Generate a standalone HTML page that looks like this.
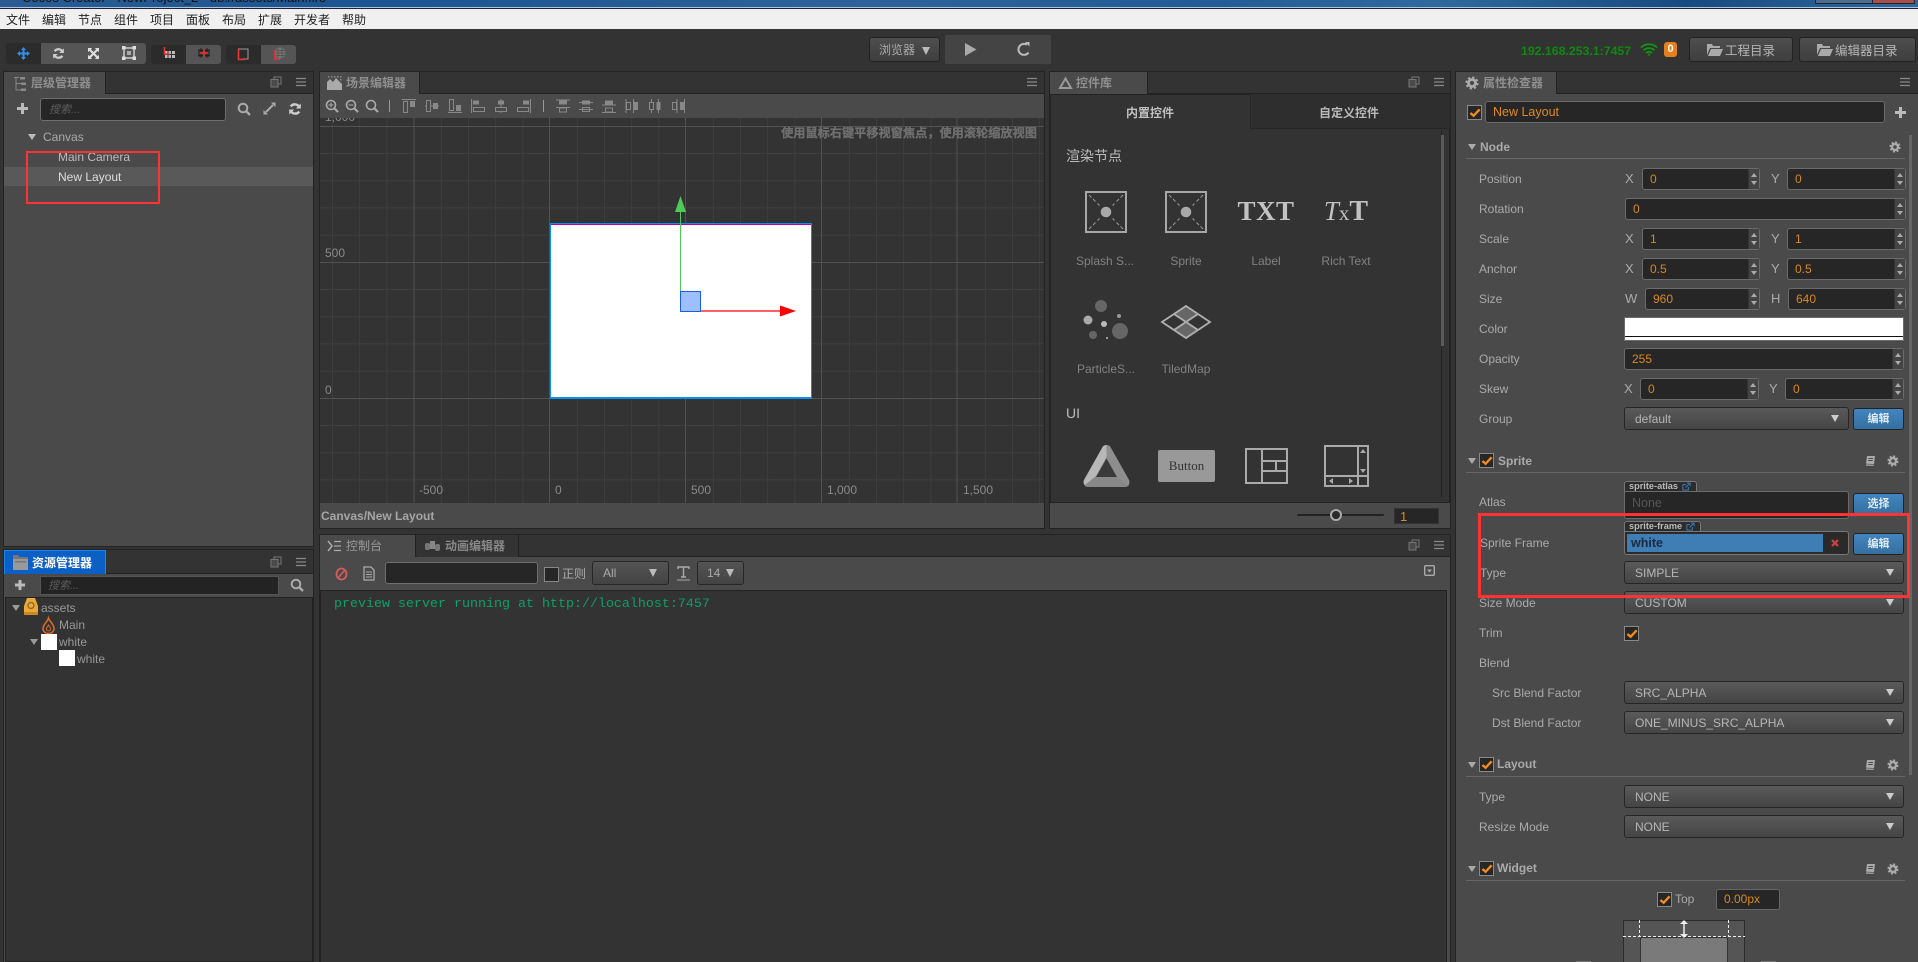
<!DOCTYPE html>
<html lang="zh"><head><meta charset="utf-8"><title>Cocos Creator</title>
<style>
html,body{margin:0;padding:0;width:1918px;height:962px;overflow:hidden;background:#333}
*{box-sizing:border-box}
body{font-family:"Liberation Sans","Noto Sans CJK SC",sans-serif;font-size:12px;color:#aaa;position:relative}
.a{position:absolute}
.t{position:absolute;white-space:nowrap;line-height:14px;height:14px}
.m{position:absolute;top:13px;color:#222;font-size:12px;line-height:14px;white-space:nowrap}
.panel{position:absolute;background:#4a4a4a;border:1px solid #232323}
.bar{position:absolute;left:0;right:0;top:0;height:22px;background:#333;border-bottom:1px solid #222}
.tab{position:absolute;left:0;top:0;height:22px;background:#4a4a4a;border-right:1px solid #222;color:#999;font-weight:bold;line-height:23px}
.num,.sel,.inp{position:absolute}
.num{background:#262626;border:1px solid #6b6b6b;border-radius:3px;color:#d8881f;line-height:20px;padding-left:7px;height:22px}
.num i{position:absolute;right:0;top:0;bottom:0;width:11px;background:#444;border-left:1px solid #333}
.num i:before{content:"";position:absolute;left:2px;top:4px;border:3px solid transparent;border-top:0;border-bottom:4px solid #aaa}
.num i:after{content:"";position:absolute;left:2px;bottom:4px;border:3px solid transparent;border-bottom:0;border-top:4px solid #aaa}
.sel{background:linear-gradient(#5a5a5a,#454545);border:1px solid #262626;border-radius:3px;color:#b5b5b5;height:23px;line-height:23px;padding-left:10px}
.sel:after{content:"";position:absolute;right:9px;top:7px;border:4px solid transparent;border-bottom:0;border-top:7px solid #ccc;border-left-width:4px;border-right-width:4px}
.lab{position:absolute;left:1479px;white-space:nowrap;line-height:14px;color:#aaa}
.ax{position:absolute;white-space:nowrap;line-height:14px;color:#aaa;font-size:13px}
.hd{position:absolute;left:1498px;font-weight:bold;color:#aaa;line-height:14px;white-space:nowrap}
.ln{position:absolute;left:1466px;width:439px;height:1px;background:#666}
.cb{position:absolute;width:15px;height:15px;background:#262626;border:1px solid #8a8a8a}
.cb svg{position:absolute;left:1px;top:1px}
.btn{position:absolute;left:1853px;width:51px;height:22px;border-radius:3px;background:linear-gradient(#4285bf,#35709f);border:1px solid #222;color:#dfeaf5;font-size:11px;font-weight:bold;text-align:center;line-height:20px}
.dn{position:absolute;border:4px solid transparent;border-bottom:0;border-top:6px solid #aaa}
.big{position:absolute;color:#828282;line-height:14px;text-align:center;white-space:nowrap;width:80px}
.lbl{position:absolute;color:#8a8a8a;line-height:14px;white-space:nowrap}
.tb{position:absolute;top:99px;width:14px;height:14px}
.pt{position:absolute;height:11px;background:#2c2c2c;border:1px solid #777;border-bottom:0;border-radius:3px 3px 0 0;color:#bbb;font-size:9.2px;font-weight:bold;line-height:9px;padding-left:4px;white-space:nowrap}
svg{display:block;overflow:visible}
</style></head><body>

<svg width="0" height="0" style="position:absolute"><defs>
<symbol id="gear" viewBox="0 0 12 12"><circle cx="6" cy="6" r="3" fill="none" stroke="#aaa" stroke-width="2.4"/><circle cx="6" cy="6" r="4.8" fill="none" stroke="#aaa" stroke-width="1.6" stroke-dasharray="2 1.77"/></symbol>
<symbol id="book" viewBox="0 0 12 12"><path d="M3 1h8l-1 8H2z" fill="#aaa"/><path d="M2 9l-.5 2H10l.5-1.6z" fill="#aaa" stroke="#4a4a4a" stroke-width=".6"/><path d="M4.5 3.5h4.5M4.2 5.5h4.5" stroke="#4a4a4a"/></symbol>
<symbol id="chk" viewBox="0 0 13 13"><path d="M1.5 6.5l3.5 3 6.5-7" fill="none" stroke="#f28a1c" stroke-width="2.6"/></symbol>
<symbol id="pop" viewBox="0 0 12 12"><rect x="1" y="3.5" width="7" height="7.5" fill="#4a4a4a" stroke="#777"/><path d="M4 3V1h7v7H8.5" fill="none" stroke="#777"/></symbol>
<symbol id="menu" viewBox="0 0 12 12"><path d="M1 2.5h10M1 6h10M1 9.500h10" stroke="#888" stroke-width="1.3"/></symbol>
<symbol id="mag" viewBox="0 0 14 14"><circle cx="6" cy="6" r="4.300" fill="none" stroke="#aaa" stroke-width="2"/><path d="M9 9l4 4" stroke="#aaa" stroke-width="2.400"/></symbol>
<symbol id="sync" viewBox="0 0 14 14"><path d="M11.500 5.500A5 5 0 0 0 2.800 4.500M2.500 8.500A5 5 0 0 0 11.200 9.500" fill="none" stroke="#ccc" stroke-width="2.400"/><path d="M12.800 1.500v5h-5zM1.200 12.500v-5h5z" fill="#ccc"/></symbol>
<symbol id="ext" viewBox="0 0 10 10"><path d="M7 5.500V9H1V3h3.500" fill="none" stroke="#3f83c0"/><path d="M4 6l4-4M5.500 1.200H9v3.500" fill="none" stroke="#3f83c0"/></symbol>
<symbol id="sprite" viewBox="0 0 42 42"><rect x="1" y="1" width="40" height="40" fill="none" stroke="#a8a8a8" stroke-width="2"/><circle cx="21" cy="21" r="5.300" fill="#a8a8a8"/><path d="M4 4l2.500 2.500M8 8l2.500 2.500M12.500 12.500l2 2M38 4l-2.500 2.500M34 8l-2.500 2.500M29.500 12.500l-2 2M4 38l2.500-2.500M8 34l2.500-2.500M12.500 29.500l2-2M38 38l-2.500-2.500M34 34l-2.500-2.500M29.500 29.500l-2-2" stroke="#999"/></symbol>
<symbol id="a1" viewBox="0 0 14 14"><path d="M0 .5h14" stroke="#888" stroke-width="1.200"/><rect x="1.500" y="2.500" width="4" height="11" fill="none" stroke="#888"/><rect x="8" y="2" width="5" height="6" fill="#888"/></symbol>
<symbol id="a2" viewBox="0 0 14 14"><path d="M0 7h14" stroke="#888"/><rect x="1.500" y="1.500" width="4" height="11" fill="#4a4a4a" stroke="#888"/><rect x="8" y="4" width="5" height="6" fill="#888"/></symbol>
<symbol id="a3" viewBox="0 0 14 14"><path d="M0 13.500h14" stroke="#888" stroke-width="1.200"/><rect x="1.500" y=".5" width="4" height="11" fill="none" stroke="#888"/><rect x="8" y="6" width="5" height="6" fill="#888"/></symbol>
<symbol id="a4" viewBox="0 0 14 14"><path d="M.5 0v14" stroke="#888" stroke-width="1.200"/><rect x="2" y="1.500" width="6" height="4" fill="#888"/><rect x="2.500" y="8.500" width="11" height="4" fill="none" stroke="#888"/></symbol>
<symbol id="a5" viewBox="0 0 14 14"><path d="M7 0v14" stroke="#888"/><rect x="4" y="1.500" width="6" height="4" fill="#888"/><rect x="1.500" y="8.500" width="11" height="4" fill="#4a4a4a" stroke="#888"/></symbol>
<symbol id="a6" viewBox="0 0 14 14"><path d="M13.500 0v14" stroke="#888" stroke-width="1.200"/><rect x="6" y="1.500" width="6" height="4" fill="#888"/><rect x=".5" y="8.500" width="11" height="4" fill="none" stroke="#888"/></symbol>
<symbol id="d1" viewBox="0 0 14 14"><path d="M0 1h14M0 8.500h14" stroke="#888"/><rect x="3" y="1.500" width="8" height="4" fill="#888"/><rect x="3.500" y="9" width="7" height="4" fill="none" stroke="#888"/></symbol>
<symbol id="d2" viewBox="0 0 14 14"><path d="M0 3.500h14M0 10.500h14" stroke="#888"/><rect x="3" y="1.500" width="8" height="4" fill="#888"/><rect x="3.500" y="8.500" width="7" height="4" fill="none" stroke="#888"/></symbol>
<symbol id="d3" viewBox="0 0 14 14"><path d="M0 6h14M0 13.500h14" stroke="#888"/><rect x="3" y="1.500" width="8" height="4" fill="#888"/><rect x="3.500" y="9" width="7" height="4" fill="none" stroke="#888"/></symbol>
<symbol id="v1" viewBox="0 0 14 14"><path d="M1 0v14M8.500 0v14" stroke="#888"/><rect x="1.500" y="3.500" width="4" height="7" fill="none" stroke="#888"/><rect x="9" y="3" width="4" height="8" fill="#888"/></symbol>
<symbol id="v2" viewBox="0 0 14 14"><path d="M3.500 0v14M10.500 0v14" stroke="#888"/><rect x="1.500" y="3.500" width="4" height="7" fill="#4a4a4a" stroke="#888"/><rect x="8.500" y="3" width="4" height="8" fill="#888"/></symbol>
<symbol id="v3" viewBox="0 0 14 14"><path d="M6 0v14M13.500 0v14" stroke="#888"/><rect x="1.500" y="3.500" width="4" height="7" fill="none" stroke="#888"/><rect x="9" y="3" width="4" height="8" fill="#888"/></symbol>
</defs></svg>

<!-- title bar -->
<div class="a" style="left:0;top:0;width:1918px;height:8px;background:linear-gradient(90deg,#2a5c92 0%,#1c5490 20%,#2d6399 45%,#235b95 62%,#2d6a9c 75%,#174a80 88%,#2f6a9d 100%);overflow:hidden">
  <div class="t" style="left:22px;top:-9px;color:#111;font-size:13px">Cocos Creator - NewProject_2 - db://assets/Main.fire</div>
  <div class="a" style="left:1815px;top:-12px;width:100px;height:16px;background:#4a6d90;border:1px solid #223"></div>
  <div class="a" style="left:1872px;top:-12px;width:43px;height:16px;background:#a85048;border:1px solid #223"></div>
</div>
<div class="a" style="left:0;top:7px;width:1918px;height:1px;background:#a8c4de"></div>
<div class="a" style="left:0;top:8px;width:1918px;height:1px;background:#223"></div>
<!-- menu -->
<div class="a" style="left:0;top:9px;width:1918px;height:20px;background:#f0f0f0">
  <div class="m" style="left:6px;top:4px">文件</div><div class="m" style="left:42px;top:4px">编辑</div><div class="m" style="left:78px;top:4px">节点</div><div class="m" style="left:114px;top:4px">组件</div><div class="m" style="left:150px;top:4px">项目</div><div class="m" style="left:186px;top:4px">面板</div><div class="m" style="left:222px;top:4px">布局</div><div class="m" style="left:258px;top:4px">扩展</div><div class="m" style="left:294px;top:4px">开发者</div><div class="m" style="left:342px;top:4px">帮助</div>
</div>

<!-- toolbar groups -->
<div class="a" style="left:6px;top:43px;width:35px;height:21px;background:#2b2b2b;border-radius:3px 0 0 3px"></div>
<div class="a" style="left:41px;top:43px;width:105px;height:21px;background:#555;border-radius:0 3px 3px 0"></div>
<svg class="a" style="left:17px;top:47px" width="13" height="13" viewBox="0 0 13 13"><path d="M6.500 0l2.500 3H7.500v2.500H10V4l3 2.500L10 9V7.500H7.500V10H9l-2.500 3L4 10h1.500V7.500H3V9L0 6.500 3 4v1.500h2.500V3H4z" fill="#2d8fef"/></svg>
<svg class="a" style="left:52px;top:47px" width="13" height="13"><use href="#sync"/></svg>
<svg class="a" style="left:87px;top:47px" width="13" height="13" viewBox="0 0 13 13"><path d="M1 1h4L4 2.500 6.500 5 9 2.500 8 1h4v4l-1.500-1L8 6.500 10.500 9 12 8v4H8l1-1.500L6.500 8 4 10.500 5 12H1V8l1.500 1L5 6.500 2.500 4 1 5z" fill="#ddd"/></svg>
<svg class="a" style="left:122px;top:46px" width="14" height="14" viewBox="0 0 14 14"><rect x="2" y="2" width="10" height="10" fill="none" stroke="#ccc" stroke-width="1.500"/><rect x="0" y="0" width="3.500" height="3.500" fill="#ddd"/><rect x="10.500" y="0" width="3.500" height="3.500" fill="#ddd"/><rect x="0" y="10.500" width="3.500" height="3.500" fill="#ddd"/><rect x="10.500" y="10.500" width="3.500" height="3.500" fill="#ddd"/><rect x="5" y="5" width="4" height="4" fill="#aaa"/></svg>

<div class="a" style="left:151px;top:45px;width:35px;height:19px;background:#2b2b2b;border-radius:3px 0 0 3px"></div>
<div class="a" style="left:186px;top:45px;width:35px;height:19px;background:#555;border-radius:0 3px 3px 0"></div>
<svg class="a" style="left:162px;top:47px" width="13" height="12" viewBox="0 0 13 12"><rect x="3" y="4" width="10" height="7" fill="#bbb"/><path d="M6 4v7M9.500 4v7M3 7.500h10" stroke="#333"/><path d="M2.500 0v7h5" fill="none" stroke="#e33" stroke-width="1.600"/></svg>
<svg class="a" style="left:198px;top:47px" width="12" height="12" viewBox="0 0 12 12"><rect x="0" y="2" width="12" height="8" fill="#3a3a3a"/><path d="M3 1v10M9 1v10M0 3.500h12M0 8.500h12" stroke="#222"/><path d="M6 2v8M2 6h8" stroke="#e33" stroke-width="1.500"/></svg>

<div class="a" style="left:226px;top:45px;width:35px;height:19px;background:#2b2b2b;border-radius:3px 0 0 3px"></div>
<div class="a" style="left:261px;top:45px;width:35px;height:19px;background:#555;border-radius:0 3px 3px 0"></div>
<svg class="a" style="left:237px;top:48px" width="12" height="13" viewBox="0 0 12 13"><path d="M1 1h10v10H4" fill="none" stroke="#999"/><path d="M1.500 1v10.500H8" fill="none" stroke="#e33" stroke-width="1.600"/></svg>
<svg class="a" style="left:273px;top:47px" width="13" height="14" viewBox="0 0 13 14"><circle cx="7" cy="6" r="5.500" fill="#777"/><path d="M2 3.500h10M1.500 6h11M2 8.500h10M5 .5v11M9 .5v11" stroke="#555"/><path d="M2 3v9h5" fill="none" stroke="#e33" stroke-width="1.600"/></svg>

<!-- centre controls -->
<div class="a" style="left:869px;top:37px;width:71px;height:25px;background:linear-gradient(#4e4e4e,#3e3e3e);border:1px solid #222;border-radius:3px"><div class="t" style="left:9px;top:5px;color:#aaa">浏览器</div><div class="dn" style="left:52px;top:9px;border-top-width:8px;border-left-width:4px;border-right-width:4px;border-top-color:#bbb"></div></div>
<div class="a" style="left:945px;top:35px;width:106px;height:29px;background:#444;border-radius:2px"></div>
<svg class="a" style="left:965px;top:43px" width="12" height="13"><path d="M0 0l11.500 6.500L0 13z" fill="#aaa"/></svg>
<svg class="a" style="left:1017px;top:42px" width="14" height="14" viewBox="0 0 14 14"><path d="M11.500 10.500A5.500 5.500 0 1 1 10 2.800" fill="none" stroke="#bbb" stroke-width="2"/><path d="M8 0h4.500v4.500z" fill="#bbb"/></svg>

<!-- right top -->
<div class="t" style="left:1521px;top:44px;color:#0d8a0d;font-size:12.300px;font-weight:bold">192.168.253.1:7457</div>
<svg class="a" style="left:1640px;top:43px" width="18" height="13" viewBox="0 0 18 13"><path d="M1 4.500a11.500 11.500 0 0 1 16 0M3.500 7.300a8 8 0 0 1 11 0M6 10a4.500 4.500 0 0 1 6 0" fill="none" stroke="#0d9a0d" stroke-width="1.700"/><path d="M9 10l1.500 2.500h-3z" fill="#0d9a0d"/></svg>
<div class="a" style="left:1664px;top:42px;width:13px;height:15px;background:#e77f1c;border-radius:3px;color:#fff;font-size:11px;font-weight:bold;text-align:center;line-height:15px">0</div>
<div class="a" style="left:1689px;top:37px;width:104px;height:25px;background:linear-gradient(#4e4e4e,#3e3e3e);border:1px solid #222;border-radius:3px"><svg class="a" style="left:17px;top:6px" width="16" height="12" viewBox="0 0 16 12"><path d="M0 0h5l1 2h7v2H3L0 11z M1 12l3-7h12l-3 7z" fill="#aaa"/></svg><div class="t" style="left:35px;top:6px;color:#b5b5b5;font-size:12.500px">工程目录</div></div>
<div class="a" style="left:1799px;top:37px;width:117px;height:25px;background:linear-gradient(#4e4e4e,#3e3e3e);border:1px solid #222;border-radius:3px"><svg class="a" style="left:17px;top:6px" width="16" height="12" viewBox="0 0 16 12"><path d="M0 0h5l1 2h7v2H3L0 11z M1 12l3-7h12l-3 7z" fill="#aaa"/></svg><div class="t" style="left:35px;top:6px;color:#b5b5b5;font-size:12.500px">编辑器目录</div></div>

<!-- hierarchy panel -->
<div class="panel" style="left:3px;top:71px;width:311px;height:476px">
  <div class="bar"></div>
  <div class="tab" style="width:102px;padding-left:27px;color:#8f8f8f">层级管理器</div>
</div>
<svg class="a" style="left:13px;top:76px" width="13" height="16" viewBox="0 0 13 16"><path d="M1 1.500h5M3 2v12h5M3 7.500h5" fill="none" stroke="#888"/><rect x="7" y="1" width="5" height="2.500" fill="#888"/><rect x="8" y="6.500" width="5" height="2.500" fill="#888"/><rect x="8" y="12.500" width="5" height="2.500" fill="#888"/></svg>
<svg class="a" style="left:270px;top:76px" width="12" height="12"><use href="#pop"/></svg>
<svg class="a" style="left:295px;top:76px" width="12" height="12"><use href="#menu"/></svg>
<svg class="a" style="left:17px;top:103px" width="11" height="11"><path d="M4 0h3v4h4v3H7v4H4V7H0V4h4z" fill="#bbb"/></svg>
<div class="a" style="left:40px;top:98px;width:186px;height:23px;background:#262626;border:1px solid #6e6e6e;border-radius:3px"><div class="t" style="left:8px;top:4px;color:#5c5c5c;font-style:italic;font-size:11px">搜索...</div></div>
<svg class="a" style="left:237px;top:102px" width="14" height="14"><use href="#mag"/></svg>
<svg class="a" style="left:263px;top:102px" width="13" height="13" viewBox="0 0 13 13"><path d="M8 .5h4.500V5zM5 12.500H.5V8z" fill="#aaa"/><path d="M3 10l7-7" stroke="#aaa" stroke-width="2"/></svg>
<svg class="a" style="left:288px;top:102px" width="14" height="14"><use href="#sync"/></svg>
<div class="dn" style="left:28px;top:134px;border-top-color:#bbb"></div>
<div class="t" style="left:43px;top:130px;color:#aaa">Canvas</div>
<div class="a" style="left:4px;top:167px;width:309px;height:19px;background:#595959"></div>
<div class="t" style="left:58px;top:150px;color:#bbb">Main Camera</div>
<div class="t" style="left:58px;top:170px;color:#ddd">New Layout</div>
<div class="a" style="left:26px;top:151px;width:134px;height:53px;border:2px solid #ff3333"></div>

<!-- assets panel -->
<div class="panel" style="left:3px;top:549px;width:311px;height:413px;border-bottom:0">
  <div class="bar" style="height:24px"></div>
  <div class="tab" style="width:102px;height:24px;background:#0c5fc4;padding-left:27px;color:#fff;line-height:24px;border:1px solid #1e86e8;border-bottom:0">资源管理器</div>
</div>
<svg class="a" style="left:13px;top:555px" width="15" height="15" viewBox="0 0 15 15"><path d="M0 0h5l1.500 2H15v13H0z" fill="#777"/><path d="M0 4h15v11H0z" fill="#999"/><path d="M2 6h11v1.500H2z" fill="#777"/></svg>
<svg class="a" style="left:270px;top:556px" width="12" height="12"><use href="#pop"/></svg>
<svg class="a" style="left:295px;top:556px" width="12" height="12"><use href="#menu"/></svg>
<svg class="a" style="left:15px;top:580px" width="10" height="10"><path d="M3.500 0h3v3.500H10v3H6.500V10h-3V6.500H0v-3h3.500z" fill="#bbb"/></svg>
<div class="a" style="left:40px;top:576px;width:239px;height:19px;background:#232323;border:1px solid #555"><div class="t" style="left:7px;top:2px;color:#5c5c5c;font-style:italic;font-size:11px">搜索...</div></div>
<svg class="a" style="left:290px;top:578px" width="14" height="14"><use href="#mag"/></svg>
<div class="a" style="left:5px;top:597px;width:308px;height:365px;background:#333;border:1px solid #232323"></div>
<div class="dn" style="left:12px;top:605px;border-top-color:#999"></div>
<svg class="a" style="left:24px;top:598px" width="14" height="17" viewBox="0 0 14 17"><path d="M3 0h8l3 8v7H0V8z" fill="#e8a93a"/><path d="M0 14h14v3H0z" fill="#c98a20"/><circle cx="7" cy="7.500" r="3" fill="none" stroke="#8a6a20" stroke-width="1.300"/></svg>
<div class="t" style="left:41px;top:601px;color:#999">assets</div>
<svg class="a" style="left:42px;top:617px" width="13" height="17" viewBox="0 0 13 17"><path d="M6.500 1C8 5 12 7.500 12 11.500a5.500 5 0 0 1-11 0C1 7.500 5.500 5 6.500 1z" fill="none" stroke="#d9692a" stroke-width="1.600"/><path d="M6.500 8c.7 1.500 2 2.500 2 4a2 2 0 0 1-4 0c0-1.500 1.300-2.500 2-4z" fill="none" stroke="#d9692a"/></svg>
<div class="t" style="left:59px;top:618px;color:#999">Main</div>
<div class="dn" style="left:30px;top:639px;border-top-color:#999"></div>
<div class="a" style="left:41px;top:634px;width:16px;height:16px;background:#fff"></div>
<div class="t" style="left:59px;top:635px;color:#999">white</div>
<div class="a" style="left:59px;top:650px;width:16px;height:16px;background:#fff"></div>
<div class="t" style="left:77px;top:652px;color:#999">white</div>

<!-- scene panel -->
<div class="panel" style="left:319px;top:71px;width:726px;height:458px">
  <div class="bar"></div>
  <div class="tab" style="width:100px;padding-left:26px;color:#8f8f8f">场景编辑器</div>
  <div class="a" style="left:0;right:0;top:22px;height:25px;background:#4a4a4a;border-bottom:1px solid #222"></div>
</div>
<svg class="a" style="left:327px;top:75px" width="15" height="15" viewBox="0 0 15 15"><path d="M0 15V7l3-3 3 3 3-4 6 6v6z" fill="#aaa"/><path d="M1 1h1.500v1.500H1zM4 1h1.500v1.500H4zM7 1h1.500v1.500H7zM10 1h1.500v1.500H10zM13 1h1.500v1.500H13zM13 4h1.500v1.500H13z" fill="#888"/></svg>
<svg class="a" style="left:1026px;top:76px" width="12" height="12"><use href="#menu"/></svg>
<!-- scene toolbar -->
<svg class="tb" style="left:325px"><circle cx="6" cy="6" r="4.500" fill="none" stroke="#aaa" stroke-width="1.600"/><path d="M9 9l4 4" stroke="#aaa" stroke-width="2.200"/><path d="M3.500 6h5M6 3.500v5" stroke="#aaa"/></svg>
<svg class="tb" style="left:345px"><circle cx="6" cy="6" r="4.500" fill="none" stroke="#aaa" stroke-width="1.600"/><path d="M9 9l4 4" stroke="#aaa" stroke-width="2.200"/><path d="M3.500 6h5" stroke="#aaa"/></svg>
<svg class="tb" style="left:365px"><circle cx="6" cy="6" r="4.500" fill="none" stroke="#aaa" stroke-width="1.600"/><path d="M9 9l4 4" stroke="#aaa" stroke-width="2.200"/></svg>
<div class="a" style="left:389px;top:100px;width:1px;height:12px;background:#999"></div>
<svg class="tb" style="left:402px"><use href="#a1"/></svg><svg class="tb" style="left:425px"><use href="#a2"/></svg><svg class="tb" style="left:448px"><use href="#a3"/></svg><svg class="tb" style="left:471px"><use href="#a4"/></svg><svg class="tb" style="left:494px"><use href="#a5"/></svg><svg class="tb" style="left:517px"><use href="#a6"/></svg>
<div class="a" style="left:543px;top:100px;width:1px;height:12px;background:#999"></div>
<svg class="tb" style="left:556px"><use href="#d1"/></svg><svg class="tb" style="left:579px"><use href="#d2"/></svg><svg class="tb" style="left:602px"><use href="#d3"/></svg><svg class="tb" style="left:625px"><use href="#v1"/></svg><svg class="tb" style="left:648px"><use href="#v2"/></svg><svg class="tb" style="left:671px"><use href="#v3"/></svg>
<!-- scene view -->
<div class="a" style="left:320px;top:118px;width:724px;height:385px;overflow:hidden;background:#333">
  <svg width="724" height="385" style="position:absolute;left:0;top:0;background:#333">
    <path d="M12.500 0v385M39.700 0v385M66.900 0v385M121.300 0v385M148.500 0v385M175.700 0v385M202.900 0v385M257.300 0v385M284.500 0v385M311.700 0v385M338.900 0v385M393.300 0v385M420.500 0v385M447.700 0v385M474.900 0v385M529.300 0v385M556.500 0v385M583.700 0v385M610.900 0v385M665.300 0v385M692.500 0v385M719.700 0v385M0 35.500h724M0 62.700h724M0 89.900h724M0 117.100h724M0 171.500h724M0 198.700h724M0 225.900h724M0 253.100h724M0 307.500h724M0 334.700h724M0 361.900h724" stroke="#3e3e3e" fill="none"/>
    <path d="M94 0v385M229.500 0v385M365.500 0v385M501.500 0v385M637 0v385M0 8.500h724M0 144.500h724M0 280.500h724" stroke="#525252" fill="none"/>
  </svg>
  <div class="lbl" style="left:5px;top:-8px">1,000</div>
  <div class="lbl" style="left:5px;top:128px">500</div>
  <div class="lbl" style="left:5px;top:265px">0</div>
  <div class="lbl" style="left:99px;top:365px">-500</div>
  <div class="lbl" style="left:235px;top:365px">0</div>
  <div class="lbl" style="left:371px;top:365px">500</div>
  <div class="lbl" style="left:507px;top:365px">1,000</div>
  <div class="lbl" style="left:643px;top:365px">1,500</div>
  <div class="t" style="right:7px;top:8px;color:#6f6f6f;font-weight:bold;font-size:12.200px;-webkit-text-stroke:.3px #6f6f6f">使用鼠标右键平移视窗焦点，使用滚轮缩放视图</div>
  <div class="a" style="left:230px;top:105px;width:262px;height:176px;background:#fff;border:1px solid #0d8fef;border-width:1px 1px 2px 1px"></div>
  <div class="a" style="left:231px;top:106px;width:260px;height:1px;background:#b000b0"></div>
  <svg class="a" style="left:0;top:0" width="724" height="385">
    <path d="M360.500 173V90" stroke="#4fc95a" stroke-width="1"/>
    <path d="M360.500 78l5.500 16h-11z" fill="#4fc95a"/>
    <path d="M380 193h82" stroke="#f00" stroke-width="1.200"/>
    <path d="M476 193l-16-5.500v11z" fill="#f00"/>
    <rect x="360.500" y="173.500" width="20" height="20" fill="#9dbfff" stroke="#1a5fe0"/>
  </svg>
</div>
<div class="t" style="left:321px;top:509px;color:#a5a5a5;font-weight:bold">Canvas/New Layout</div>

<!-- control library panel -->
<div class="panel" style="left:1049px;top:71px;width:402px;height:458px">
  <div class="bar"></div>
  <div class="tab" style="width:98px;padding-left:26px;color:#8f8f8f">控件库</div>
</div>
<svg class="a" style="left:1059px;top:77px" width="13" height="12" viewBox="0 0 13 12"><path d="M6.500 1.500L12 11H1z" fill="none" stroke="#999" stroke-width="2"/></svg>
<svg class="a" style="left:1408px;top:76px" width="12" height="12"><use href="#pop"/></svg>
<svg class="a" style="left:1433px;top:76px" width="12" height="12"><use href="#menu"/></svg>
<div class="a" style="left:1050px;top:94px;width:400px;height:409px;background:#333;border:1px solid #232323"></div>
<div class="a" style="left:1250px;top:94px;width:200px;height:35px;background:#2e2e2e;border-left:1px solid #262626;border-bottom:1px solid #262626"></div>
<div class="t" style="left:1126px;top:106px;color:#c0c0c0;font-weight:bold">内置控件</div>
<div class="t" style="left:1319px;top:106px;color:#bbb;font-weight:bold">自定义控件</div>
<div class="t" style="left:1066px;top:149px;color:#bbb;font-size:14px">渲染节点</div>
<svg class="a" style="left:1085px;top:191px" width="42" height="42"><use href="#sprite"/></svg>
<svg class="a" style="left:1165px;top:191px" width="42" height="42"><use href="#sprite"/></svg>
<div class="big" style="left:1226px;top:198px;font:bold 27px/26px 'Liberation Serif',serif;color:#c2c2c2;letter-spacing:.5px">TXT</div>
<div class="big" style="left:1306px;top:198px;font:27px/26px 'Liberation Serif',serif;color:#c2c2c2"><i>T</i><span style="font-size:21px">x</span><b style="font-size:28px">T</b></div>
<div class="big" style="left:1065px;top:254px">Splash S...</div>
<div class="big" style="left:1146px;top:254px">Sprite</div>
<div class="big" style="left:1226px;top:254px">Label</div>
<div class="big" style="left:1306px;top:254px">Rich Text</div>
<svg class="a" style="left:1080px;top:298px" width="52" height="44"><circle cx="21" cy="8" r="6" fill="#666"/><circle cx="8" cy="22" r="4.500" fill="#aaa"/><circle cx="24" cy="26" r="3" fill="#bbb"/><circle cx="39" cy="18" r="2" fill="#999"/><circle cx="40" cy="33" r="8" fill="#666"/><circle cx="13" cy="37" r="4" fill="#666"/><circle cx="27" cy="40" r="1" fill="#bbb"/></svg>
<svg class="a" style="left:1161px;top:305px" width="50" height="34" viewBox="0 0 50 34"><path d="M25 1l12 8-12 8-12-8z" fill="#666"/><path d="M25 17l12 8-12 8-12-8z" fill="#666"/><path d="M25 1l24 16-24 16L1 17z" fill="none" stroke="#b0b0b0" stroke-width="1.800"/><path d="M13 9l24 16M37 9L13 25" stroke="#b0b0b0" stroke-width="1.800"/></svg>
<div class="big" style="left:1066px;top:362px">ParticleS...</div>
<div class="big" style="left:1146px;top:362px">TiledMap</div>
<div class="t" style="left:1066px;top:406px;color:#bbb;font-size:14px">UI</div>
<svg class="a" style="left:1083px;top:445px" width="47" height="42" viewBox="0 0 47 42"><path d="M23.500 0c3 0 4 2 5 4L46 35c1 3 0 7-4 7H5c-4 0-5-4-4-7L18.500 4c1-2 2-4 5-4z" fill="#888"/><path d="M23.500 0c-3 0-4 2-5 4L1 35c-1 2 0 4 1 5l11-9L23.500 12z" fill="#b8b8b8"/><path d="M23.500 0c3 0 4 2 5 4L46 35c1 3 0 5-1 6L33 31 23.500 12z" fill="#8e8e8e"/><path d="M13 32h21L23.500 13.500z" fill="#3a3a3a"/></svg>
<div class="a" style="left:1158px;top:450px;width:57px;height:32px;background:#999;border-radius:2px;color:#333;font:13px/32px 'Liberation Serif',serif;text-align:center">Button</div>
<svg class="a" style="left:1245px;top:448px" width="43" height="36" viewBox="0 0 43 36"><path d="M1 1h41v34H1zM17 1v34M17 13h25M17 23h25M31 13v10" fill="none" stroke="#aaa" stroke-width="2"/></svg>
<svg class="a" style="left:1324px;top:445px" width="45" height="42" viewBox="0 0 45 42"><path d="M1 1h43v40H1zM34 1v40M1 31h43" fill="none" stroke="#aaa" stroke-width="2"/><path d="M39 4l3 4h-6zM39 28l3-4h-6zM5 36l4-3v6zM29 36l-4-3v6z" fill="#aaa"/></svg>
<div class="a" style="left:1441px;top:130px;width:1px;height:367px;background:#222"></div>
<div class="a" style="left:1441px;top:135px;width:3px;height:211px;background:#5a5a5a"></div>
<div class="a" style="left:1297px;top:514px;width:87px;height:2px;background:#222;border-radius:1px"></div>
<div class="a" style="left:1330px;top:509px;width:12px;height:12px;border-radius:50%;background:#2a2a2a;border:2px solid #aaa"></div>
<div class="a" style="left:1394px;top:508px;width:45px;height:16px;background:#262626;border:1px solid #333;color:#d8881f;font-size:13px;line-height:15px;padding-left:5px">1</div>

<!-- console panel -->
<div class="panel" style="left:319px;top:534px;width:1132px;height:428px;border-bottom:0">
  <div class="bar" style="background:#333"></div>
  <div class="tab" style="width:96px;padding-left:26px;color:#999;font-weight:normal">控制台</div>
  <div class="tab" style="left:97px;width:102px;padding-left:28px;background:#333;color:#888;font-weight:bold">动画编辑器</div>
</div>
<svg class="a" style="left:327px;top:540px" width="14" height="12" viewBox="0 0 14 12"><path d="M1 1l4 5-4 5" fill="none" stroke="#aaa" stroke-width="1.500"/><path d="M7 1.500h7M7 6h7M7 10.500h7" stroke="#aaa" stroke-width="1.300"/></svg>
<svg class="a" style="left:425px;top:540px" width="16" height="12" viewBox="0 0 16 12"><rect x="0" y="3" width="5" height="7" rx="2" fill="#777"/><rect x="5" y="1" width="5" height="8" fill="#888"/><rect x="10" y="4" width="5" height="7" rx="2" fill="#777"/></svg>
<svg class="a" style="left:1408px;top:539px" width="12" height="12"><use href="#pop"/></svg>
<svg class="a" style="left:1433px;top:539px" width="12" height="12"><use href="#menu"/></svg>
<svg class="a" style="left:335px;top:567px" width="13" height="14" viewBox="0 0 13 14"><ellipse cx="6.500" cy="7" rx="5" ry="5.500" fill="none" stroke="#d45c5c" stroke-width="1.800"/><path d="M3 11L10 3" stroke="#d45c5c" stroke-width="1.600"/></svg>
<svg class="a" style="left:363px;top:566px" width="12" height="15" viewBox="0 0 12 15"><path d="M1 1h7l3 3v10H1z" fill="none" stroke="#aaa" stroke-width="1.300"/><path d="M3 6h6M3 8.500h6M3 11h6" stroke="#aaa"/></svg>
<div class="a" style="left:385px;top:562px;width:153px;height:22px;background:#262626;border:1px solid #6e6e6e;border-radius:3px"></div>
<div class="a" style="left:544px;top:567px;width:15px;height:15px;background:#262626;border:1px solid #888"></div>
<div class="t" style="left:562px;top:567px;color:#aaa">正则</div>
<div class="a" style="left:592px;top:561px;width:77px;height:24px;background:linear-gradient(#545454,#434343);border:1px solid #262626;border-radius:3px;color:#aaa;line-height:22px;padding-left:10px">All<div class="dn" style="left:56px;top:7px;border-top-width:8px;border-top-color:#bbb"></div></div>
<svg class="a" style="left:677px;top:566px" width="13" height="15" viewBox="0 0 13 15"><path d="M1 3V1h11v2M6.500 1v10M4 11h5" fill="none" stroke="#aaa" stroke-width="1.400"/><path d="M0 14h13" stroke="#aaa"/></svg>
<div class="a" style="left:697px;top:561px;width:47px;height:24px;background:linear-gradient(#545454,#434343);border:1px solid #262626;border-radius:3px;color:#aaa;line-height:22px;padding-left:9px">14<div class="dn" style="left:28px;top:7px;border-top-width:8px;border-top-color:#bbb"></div></div>
<svg class="a" style="left:1424px;top:565px" width="11" height="11" viewBox="0 0 11 11"><rect x=".7" y=".7" width="9.600" height="9.600" rx="1" fill="none" stroke="#aaa" stroke-width="1.400"/><path d="M5.500 7.500l-2.500-3h5z" fill="#aaa"/></svg>
<div class="a" style="left:320px;top:590px;width:1127px;height:372px;background:#333;border:1px solid #232323;border-bottom:0"></div>
<div class="t" style="left:334px;top:598px;font-family:'Liberation Mono',monospace;font-size:13.330px;color:#0ba06a">preview server running at http://localhost:7457</div>

<!-- inspector -->
<div class="panel" style="left:1455px;top:71px;width:463px;height:891px;border-bottom:0;border-right:0">
  <div class="bar"></div>
  <div class="tab" style="width:101px;padding-left:27px;color:#8f8f8f">属性检查器</div>
</div>
<svg class="a" style="left:1465px;top:76px" width="14" height="14"><use href="#gear"/></svg>
<svg class="a" style="left:1899px;top:76px" width="12" height="12"><use href="#menu"/></svg>
<div class="cb" style="left:1467px;top:105px"><svg width="12" height="12"><use href="#chk"/></svg></div>
<div class="a" style="left:1485px;top:101px;width:400px;height:22px;background:#262626;border:1px solid #6b6b6b;border-radius:3px;color:#e08a1e;font-size:12.500px;line-height:20px;padding-left:7px">New Layout</div>
<svg class="a" style="left:1895px;top:107px" width="11" height="11"><path d="M4 0h3v4h4v3H7v4H4V7H0V4h4z" fill="#bbb"/></svg>
<div class="a" style="left:1909px;top:135px;width:3px;height:640px;background:#666"></div>

<div class="dn" style="left:1468px;top:144px"></div>
<div class="t" style="left:1480px;top:140px;color:#aaa;font-weight:bold">Node</div>
<svg class="a" style="left:1889px;top:141px" width="12" height="12"><use href="#gear"/></svg>
<div class="ln" style="top:158px"></div>

<div class="lab" style="top:172px">Position</div><div class="ax" style="left:1625px;top:172px">X</div><div class="num" style="left:1642px;top:168px;width:118px">0<i></i></div><div class="ax" style="left:1771px;top:172px">Y</div><div class="num" style="left:1787px;top:168px;width:119px">0<i></i></div>
<div class="lab" style="top:202px">Rotation</div><div class="num" style="left:1625px;top:198px;width:281px">0<i></i></div>
<div class="lab" style="top:232px">Scale</div><div class="ax" style="left:1625px;top:232px">X</div><div class="num" style="left:1642px;top:228px;width:118px">1<i></i></div><div class="ax" style="left:1771px;top:232px">Y</div><div class="num" style="left:1787px;top:228px;width:119px">1<i></i></div>
<div class="lab" style="top:262px">Anchor</div><div class="ax" style="left:1625px;top:262px">X</div><div class="num" style="left:1642px;top:258px;width:118px">0.5<i></i></div><div class="ax" style="left:1771px;top:262px">Y</div><div class="num" style="left:1787px;top:258px;width:119px">0.5<i></i></div>
<div class="lab" style="top:292px">Size</div><div class="ax" style="left:1625px;top:292px">W</div><div class="num" style="left:1645px;top:288px;width:115px">960<i></i></div><div class="ax" style="left:1771px;top:292px">H</div><div class="num" style="left:1788px;top:288px;width:118px">640<i></i></div>
<div class="lab" style="top:322px">Color</div>
<div class="a" style="left:1624px;top:317px;width:280px;height:24px;background:#fff;border:1px solid #6b6b6b"><div class="a" style="left:0;right:0;bottom:3px;height:1px;background:#111"></div></div>
<div class="lab" style="top:352px">Opacity</div><div class="num" style="left:1624px;top:348px;width:280px">255<i></i></div>
<div class="lab" style="top:382px">Skew</div><div class="ax" style="left:1624px;top:382px">X</div><div class="num" style="left:1640px;top:378px;width:119px">0<i></i></div><div class="ax" style="left:1769px;top:382px">Y</div><div class="num" style="left:1785px;top:378px;width:119px">0<i></i></div>
<div class="lab" style="top:412px">Group</div><div class="sel" style="left:1624px;top:407px;width:225px">default</div><div class="btn" style="top:408px">编辑</div>

<div class="dn" style="left:1468px;top:458px"></div>
<div class="cb" style="left:1479px;top:453px"><svg width="12" height="12"><use href="#chk"/></svg></div>
<div class="hd" style="top:454px">Sprite</div>
<svg class="a" style="left:1864px;top:455px" width="12" height="12"><use href="#book"/></svg>
<svg class="a" style="left:1887px;top:455px" width="12" height="12"><use href="#gear"/></svg>
<div class="ln" style="top:472px"></div>

<div class="lab" style="top:495px">Atlas</div>
<div class="pt" style="left:1624px;top:481px;width:73px">sprite-atlas<svg class="a" style="left:57px;top:0" width="9" height="9"><use href="#ext"/></svg></div>
<div class="a" style="left:1624px;top:491px;width:225px;height:28px;background:#262626;border:1px solid #6b6b6b;border-radius:0 3px 3px 3px;color:#555;font-size:12.500px;padding:4px 0 0 7px;line-height:14px">None</div>
<div class="btn" style="top:493px">选择</div>

<div class="lab" style="top:536px;left:1480px">Sprite Frame</div>
<div class="pt" style="left:1624px;top:521px;width:77px">sprite-frame<svg class="a" style="left:61px;top:0" width="9" height="9"><use href="#ext"/></svg></div>
<div class="a" style="left:1624px;top:531px;width:225px;height:24px;background:#2a2a2a;border:1px solid #777;border-radius:0 3px 3px 3px"></div>
<div class="a" style="left:1627px;top:534px;width:196px;height:18px;background:#3f7db5;color:#1c2c40;font-weight:bold;line-height:18px;padding-left:4px;font-size:12.500px">white</div>
<svg class="a" style="left:1831px;top:539px" width="8" height="8"><path d="M1 1l6 6M7 1L1 7" stroke="#d04040" stroke-width="2.200"/></svg>
<div class="btn" style="top:533px">编辑</div>

<div class="lab" style="top:566px;left:1480px">Type</div><div class="sel" style="left:1624px;top:561px;width:280px">SIMPLE</div>
<div class="lab" style="top:596px">Size Mode</div><div class="sel" style="left:1624px;top:591px;width:280px">CUSTOM</div>
<div class="a" style="left:1478px;top:513px;width:432px;height:85px;border:3px solid #ff3333"></div>
<div class="lab" style="top:626px">Trim</div><div class="cb" style="left:1624px;top:626px"><svg width="12" height="12"><use href="#chk"/></svg></div>
<div class="lab" style="top:656px">Blend</div>
<div class="lab" style="top:686px;left:1492px">Src Blend Factor</div><div class="sel" style="left:1624px;top:681px;width:280px">SRC_ALPHA</div>
<div class="lab" style="top:716px;left:1492px">Dst Blend Factor</div><div class="sel" style="left:1624px;top:711px;width:280px">ONE_MINUS_SRC_ALPHA</div>

<div class="dn" style="left:1468px;top:762px"></div>
<div class="cb" style="left:1479px;top:757px"><svg width="12" height="12"><use href="#chk"/></svg></div>
<div class="hd" style="top:757px;left:1497px">Layout</div>
<svg class="a" style="left:1864px;top:759px" width="12" height="12"><use href="#book"/></svg>
<svg class="a" style="left:1887px;top:759px" width="12" height="12"><use href="#gear"/></svg>
<div class="ln" style="top:776px"></div>
<div class="lab" style="top:790px">Type</div><div class="sel" style="left:1624px;top:785px;width:280px">NONE</div>
<div class="lab" style="top:820px">Resize Mode</div><div class="sel" style="left:1624px;top:815px;width:280px">NONE</div>

<div class="dn" style="left:1468px;top:866px"></div>
<div class="cb" style="left:1479px;top:861px"><svg width="12" height="12"><use href="#chk"/></svg></div>
<div class="hd" style="top:861px;left:1497px">Widget</div>
<svg class="a" style="left:1864px;top:863px" width="12" height="12"><use href="#book"/></svg>
<svg class="a" style="left:1887px;top:863px" width="12" height="12"><use href="#gear"/></svg>
<div class="ln" style="top:880px"></div>
<div class="cb" style="left:1657px;top:892px"><svg width="12" height="12"><use href="#chk"/></svg></div>
<div class="t" style="left:1675px;top:892px;color:#aaa">Top</div>
<div class="a" style="left:1716px;top:889px;width:64px;height:21px;background:#262626;border:1px solid #666;border-radius:3px;color:#d8881f;font-size:12px;line-height:19px;padding-left:7px">0.00px</div>
<div class="a" style="left:1623px;top:920px;width:122px;height:42px;background:#555;border:1px solid #2a2a2a;border-bottom:0"></div>
<div class="a" style="left:1640px;top:937px;width:88px;height:25px;background:#7a7a7a;border:1px solid #333;border-bottom:0;border-radius:2px 2px 0 0"></div>
<svg class="a" style="left:1623px;top:920px" width="122" height="42"><path d="M0 16.500h122M16.500 0v16M105.500 0v16" stroke="#eee" stroke-dasharray="3 2" fill="none"/><path d="M61 3v12" stroke="#eee" stroke-width="1.500"/><path d="M61 0l4 4h-8zM61 18l4-4h-8z" fill="#eee"/></svg>
<div class="a" style="left:1576px;top:961px;width:15px;height:1px;background:#777"></div>
<div class="a" style="left:1761px;top:961px;width:15px;height:1px;background:#777"></div>

</body></html>
